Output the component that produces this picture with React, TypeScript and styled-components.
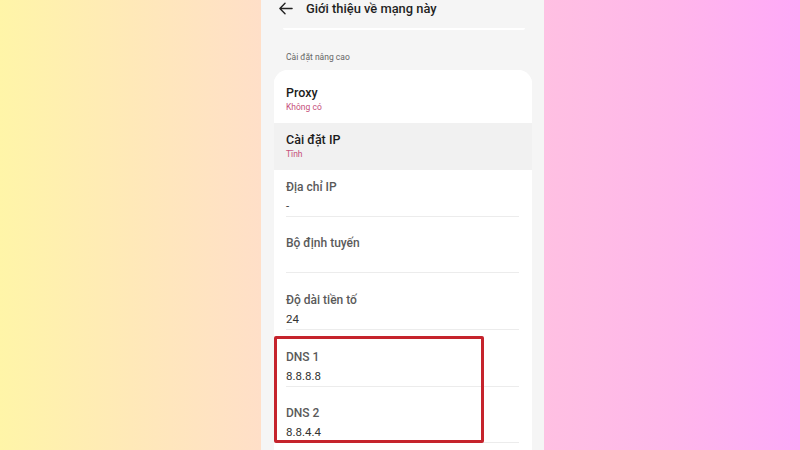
import * as React from "react";
import styled, { createGlobalStyle } from "styled-components";

const GlobalStyle = createGlobalStyle`
  html, body {
    margin: 0;
    padding: 0;
    height: 100%;
  }
  body {
    font-family: Roboto, "Noto Sans", sans-serif;
    overflow: hidden;
  }
`;

type Field = {
  label: string;
  value: string;
  height: number;
};

const fields: Field[] = [
  { label: "Địa chỉ IP", value: "-", height: 47 },
  { label: "Bộ định tuyến", value: "", height: 56 },
  { label: "Độ dài tiền tố", value: "24", height: 57 },
];

const dnsFields: Field[] = [
  { label: "DNS 1", value: "8.8.8.8", height: 57 },
  { label: "DNS 2", value: "8.8.4.4", height: 56 },
];

const App: React.FC = () => {
  return (
    <>
      <GlobalStyle />
      <Stage>
        <LeftFade />
        <Phone>
          <Header>
            <BackArrow viewBox="0 0 16 16">
              <path d="M15 8H2M7.5 2.5L2 8l5.5 5.5" />
            </BackArrow>
            <Title>Giới thiệu về mạng này</Title>
          </Header>
          <PrevCardEdge />
          <SectionLabel>Cài đặt nâng cao</SectionLabel>
          <Card>
            <TitleRow $height={53} $pad={6}>
              <RowTitle>Proxy</RowTitle>
              <RowSubtitle>Không có</RowSubtitle>
            </TitleRow>
            <TitleRow $height={47} $pad={0} $highlighted>
              <RowTitle>Cài đặt IP</RowTitle>
              <RowSubtitle>Tĩnh</RowSubtitle>
            </TitleRow>
            {fields.map((f) => (
              <FieldRow key={f.label} $height={f.height}>
                <FieldLabel>{f.label}</FieldLabel>
                <FieldValue>{f.value || "\u00a0"}</FieldValue>
              </FieldRow>
            ))}
            <Highlight>
              {dnsFields.map((f) => (
                <FieldRow key={f.label} $height={f.height}>
                  <FieldLabel>{f.label}</FieldLabel>
                  <FieldValue>{f.value}</FieldValue>
                </FieldRow>
              ))}
              <RedBox />
            </Highlight>
          </Card>
        </Phone>
        <RightFade />
      </Stage>
    </>
  );
};

const Stage = styled.div`
  display: grid;
  grid-template-columns: 261px 283px 1fr;
  width: 800px;
  height: 450px;
  overflow: hidden;
`;

const LeftFade = styled.div`
  background: linear-gradient(90deg, #fff5a8 0%, #ffe9b8 50%, #ffdfc8 100%);
`;

const RightFade = styled.div`
  background: linear-gradient(90deg, #ffc0e2 0%, #ffb6ea 50%, #ffa9f8 100%);
`;

const Phone = styled.div`
  display: flex;
  flex-direction: column;
  background: #f5f5f5;
  overflow: hidden;
`;

const Header = styled.div`
  display: flex;
  align-items: center;
  gap: 13px;
  height: 16px;
  padding: 0 0 0 17px;
`;

const BackArrow = styled.svg`
  width: 15px;
  height: 15px;
  fill: none;
  stroke: #222;
  stroke-width: 1.5;
  stroke-linecap: round;
  stroke-linejoin: round;
`;

const Title = styled.div`
  font-size: 12.9px;
  font-weight: 500;
  color: #1f1f1f;
`;

const PrevCardEdge = styled.div`
  height: 2px;
  margin: 12px 19px 0 22px;
  background: #ffffff;
  border-radius: 0 0 2px 2px;
`;

const SectionLabel = styled.div`
  padding: 21px 0 0 25px;
  font-size: 8.5px;
  color: #666;
  line-height: 12px;
`;

const Card = styled.div`
  flex: 1;
  margin: 7px 12px 0 13px;
  background: #ffffff;
  border-radius: 14px 14px 0 0;
  overflow: hidden;
`;

const TitleRow = styled.div<{ $highlighted?: boolean; $height: number; $pad: number }>`
  display: flex;
  flex-direction: column;
  justify-content: center;
  height: ${(p) => p.$height}px;
  padding: ${(p) => p.$pad}px 12px 0;
  box-sizing: border-box;
  background: ${(p) => (p.$highlighted ? "#f1f1f1" : "#ffffff")};
`;

const RowTitle = styled.div`
  font-size: 12.5px;
  font-weight: 500;
  color: #1c1c1c;
  line-height: 16px;
`;

const RowSubtitle = styled.div`
  font-size: 8.5px;
  color: #c6507c;
  line-height: 13px;
`;

const FieldRow = styled.div<{ $height: number }>`
  display: flex;
  flex-direction: column;
  justify-content: flex-end;
  height: ${(p) => p.$height}px;
  margin: 0 13px 0 12px;
  padding-bottom: 2px;
  box-sizing: border-box;
  border-bottom: 1px solid #ececec;
`;

const FieldLabel = styled.div`
  font-size: 12px;
  font-weight: 500;
  color: #5a5a5a;
  line-height: 16px;
  margin-bottom: 3px;
`;

const FieldValue = styled.div`
  font-size: 11.5px;
  color: #333;
  line-height: 16px;
`;

const Highlight = styled.div`
  position: relative;
`;

const RedBox = styled.div`
  position: absolute;
  left: 0;
  top: 6px;
  width: 210px;
  height: 107px;
  box-sizing: border-box;
  border: 3px solid #c5232c;
  border-radius: 2px;
  pointer-events: none;
`;

export default App;
